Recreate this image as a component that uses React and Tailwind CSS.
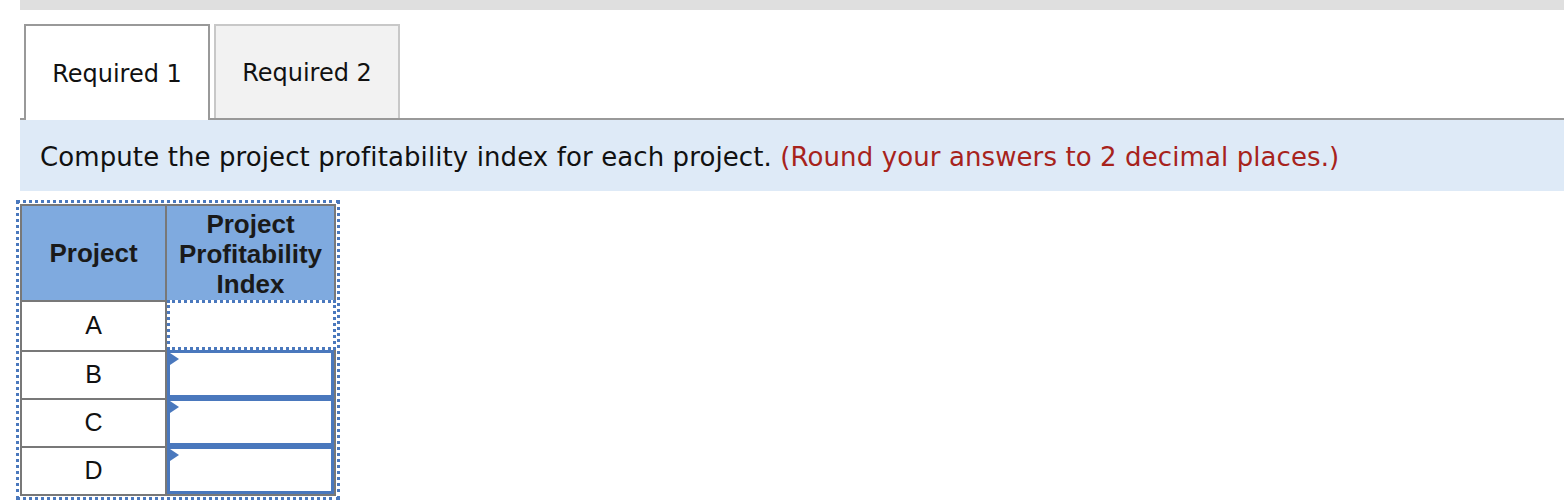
import React from 'react';

const rows = ['A', 'B', 'C', 'D'];

const Tab = ({ label, active }) => (
  <div
    className={
      active
        ? 'w-[186px] h-[96px] -mb-[2px] bg-white border-2 border-b-0 border-[#999999] flex items-center justify-center pt-[2px]'
        : 'w-[186px] h-[94px] bg-[#f2f2f2] border-2 border-b-0 border-[#c8c8c8] flex items-center justify-center pt-[2px]'
    }
  >
    <span className="text-[24px] text-[#111]">{label}</span>
  </div>
);

const App = () => {
  return (
    <div className="min-h-screen bg-white pl-5" style={{ fontFamily: '"DejaVu Sans", Verdana, sans-serif' }}>
      <div className="h-[10px] bg-[#dfdfdf]" />

      {/* tabs */}
      <div className="flex gap-1 pl-1 pt-[14px] border-b-2 border-[#999999]">
        <Tab label="Required 1" active />
        <Tab label="Required 2" />
      </div>

      {/* instructions */}
      <div className="h-[71px] bg-[#deeaf7] flex items-center pl-5 pt-[3px]">
        <p className="text-[26px] tracking-[0.1px] text-[#111]">
          Compute the project profitability index for each project.{' '}
          <span className="text-[#a7231c]">(Round your answers to 2 decimal places.)</span>
        </p>
      </div>

      {/* table */}
      <div
        className="inline-block -ml-1 mt-[9px] border-[3px] border-dotted border-[#4a78bd] p-px"
        style={{ fontFamily: '"Liberation Sans", Arial, sans-serif' }}
      >
        <div className="w-[316px] border-2 border-[#787878]">
          <div className="flex h-[96px] bg-[#7faadf] text-[#1a1a1a] font-bold text-[26px] leading-[30px]">
            <div className="w-[145px] border-r-2 border-b-2 border-[#787878] flex items-center justify-center">
              Project
            </div>
            <div className="flex-1 flex items-center justify-center text-center">
              Project
              <br />
              Profitability
              <br />
              Index
            </div>
          </div>
          {rows.map((r, i) => (
            <div key={r} className={i === 0 ? 'flex h-[48px]' : 'flex h-[48px] border-t-2 border-[#787878]'}>
              <div className="w-[145px] border-r-2 border-[#787878] flex items-center justify-center text-[25px] text-[#111]">
                {r}
              </div>
              {i === 0 ? (
                <div className="flex-1 -mt-[2px] -mr-[2px] border-[3px] border-dotted border-[#4a78bd] bg-white" />
              ) : (
                <div className="relative flex-1 -mt-[2px] border-[3px] border-[#4a78bd] bg-white">
                  <span className="absolute left-0 top-0 w-0 h-0 border-y-[6px] border-y-transparent border-l-[9px] border-l-[#4a78bd]" />
                </div>
              )}
            </div>
          ))}
        </div>
      </div>
    </div>
  );
};

export default App;
